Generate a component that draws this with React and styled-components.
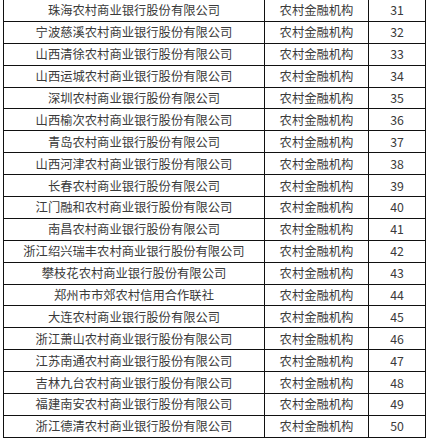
import React from "react";
import styled, { createGlobalStyle } from "styled-components";

const rows = [
  ["珠海农村商业银行股份有限公司", 31],
  ["宁波慈溪农村商业银行股份有限公司", 32],
  ["山西清徐农村商业银行股份有限公司", 33],
  ["山西运城农村商业银行股份有限公司", 34],
  ["深圳农村商业银行股份有限公司", 35],
  ["山西榆次农村商业银行股份有限公司", 36],
  ["青岛农村商业银行股份有限公司", 37],
  ["山西河津农村商业银行股份有限公司", 38],
  ["长春农村商业银行股份有限公司", 39],
  ["江门融和农村商业银行股份有限公司", 40],
  ["南昌农村商业银行股份有限公司", 41],
  ["浙江绍兴瑞丰农村商业银行股份有限公司", 42],
  ["攀枝花农村商业银行股份有限公司", 43],
  ["郑州市市郊农村信用合作联社", 44],
  ["大连农村商业银行股份有限公司", 45],
  ["浙江萧山农村商业银行股份有限公司", 46],
  ["江苏南通农村商业银行股份有限公司", 47],
  ["吉林九台农村商业银行股份有限公司", 48],
  ["福建南安农村商业银行股份有限公司", 49],
  ["浙江德清农村商业银行股份有限公司", 50],
];

const GlobalStyle = createGlobalStyle`
  html, body {
    margin: 0;
    padding: 0;
    background: #ffffff;
  }
`;

const Page = styled.div`
  padding: 0 0 0 3px;
  margin-top: -1px;
`;

const Table = styled.table`
  border-collapse: collapse;
  table-layout: fixed;
  width: 423px;
  font-family: "Microsoft YaHei", "Noto Sans CJK SC", sans-serif;
  font-size: 12.3px;
  color: #3a3a3a;
`;

const Cell = styled.td`
  width: ${(p) => p.$w}px;
  height: 20.9px;
  padding: 0;
  border: 1px solid #111;
  text-align: center;
  vertical-align: middle;
  line-height: 14px;
  white-space: nowrap;
  overflow: hidden;
`;

export default function App() {
  return (
    <Page>
      <GlobalStyle />
      <Table>
        <tbody>
          {rows.map(([name, num]) => (
            <tr key={num}>
              <Cell $w={260}>{name}</Cell>
              <Cell $w={103}>农村金融机构</Cell>
              <Cell $w={56}>{num}</Cell>
            </tr>
          ))}
        </tbody>
      </Table>
    </Page>
  );
}
